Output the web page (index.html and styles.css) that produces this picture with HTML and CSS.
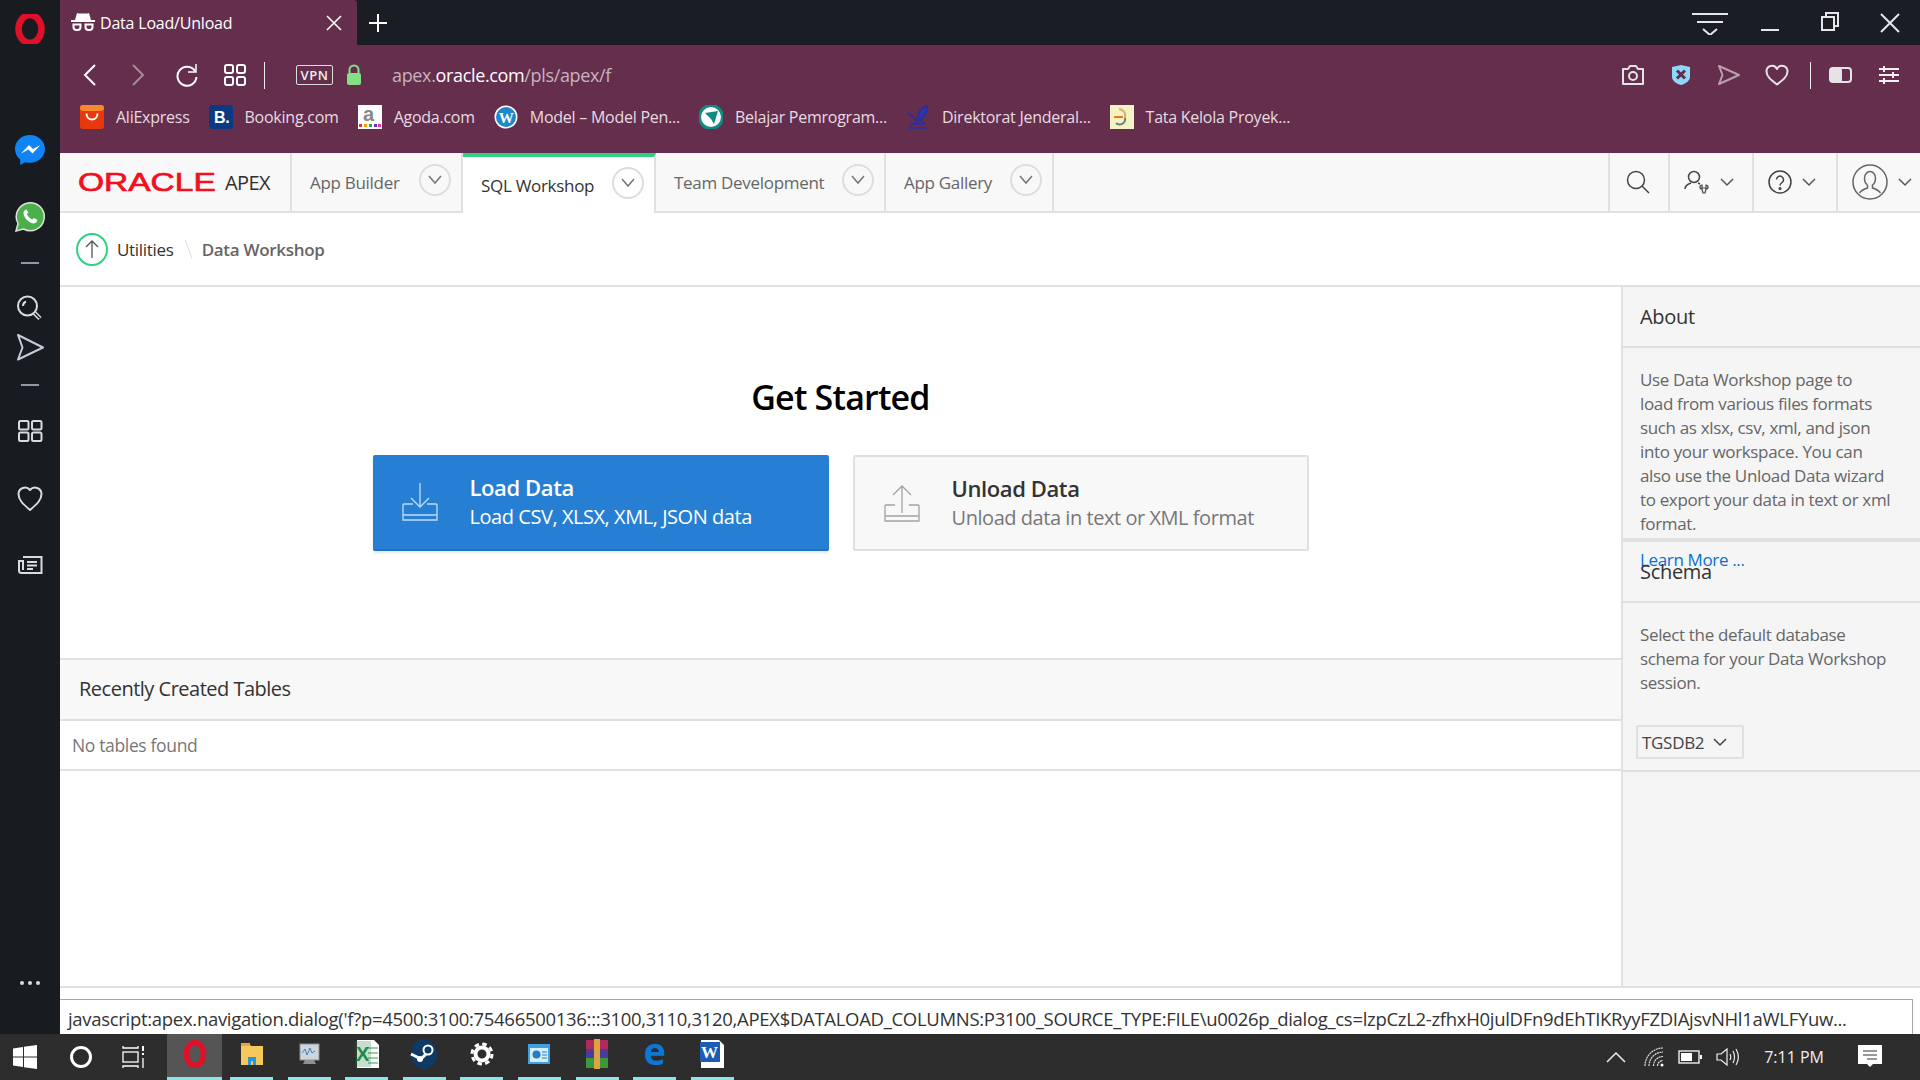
FILE: index.html
```html
<!DOCTYPE html>
<html>
<head>
	<meta charset="utf-8"/>
	<title>Data Load/Unload</title>
	<link rel="stylesheet" href="styles.css">
</head>
<body>

<div class="desktop">

	<!-- opera side rail -->
	<nav class="rail">
		<svg class="rail-logo" width="30" height="30" viewBox="0 0 30 30"><ellipse cx="15" cy="15" rx="11.5" ry="14" fill="none" stroke="#e0102a" stroke-width="6.5"/></svg>
		<div class="rail-group rail-apps">
			<svg width="30" height="30" viewBox="0 0 30 30"><path d="M15 0C6.7 0 0 6.2 0 14c0 4.3 2 8 5.2 10.600V30l5-2.800c1.500.4 3.100.6 4.800.6 8.300 0 15-6.200 15-13.800S23.300 0 15 0z" fill="#0f84f5"/><path d="M6 18.500l8-8.500 4 4 7.500-4-8 8.500-4-4z" fill="#fff"/></svg>
			<svg width="30" height="30" viewBox="0 0 30 30"><path d="M1 29l2-7.500A14 14 0 1 1 8.500 27z" fill="#4bb04b" stroke="#e0e0e0" stroke-width="1.500"/><path d="M10 8c-1.500 1-2 3-1 5.500 1.500 3.500 4 6 7.500 7.500 2.500 1 4.500 0 5.500-1.500l.3-1.800-3.500-1.800-1.500 1.700c-2.500-1-4.500-3-5.500-5.500l1.500-1.500L11.500 7.500z" fill="#fff"/></svg>
		</div>
		<div class="rail-dash"></div>
		<svg class="rail-icon" width="30" height="30" viewBox="0 0 30 30" fill="none" stroke="#d8dce0" stroke-width="2"><circle cx="12.500" cy="12" r="9.500"/><path d="M8 12a5 5 0 0 1 3-4.500"/><path d="M19.500 19l5.500 5.500" stroke-width="4.500"/><path d="M19.800 19.300l5 5" stroke="#181c21" stroke-width="1.500"/></svg>
		<svg class="rail-icon rail-send" width="30" height="30" viewBox="0 0 30 30" fill="none" stroke="#c8ccd2" stroke-width="2"><path d="M3 3l25 12.500L3 27.500l4.500-12z" stroke-linejoin="round"/></svg>
		<div class="rail-dash"></div>
		<div class="rail-group">
			<svg class="rail-icon" width="30" height="30" viewBox="0 0 30 30" fill="none" stroke="#d8dce0" stroke-width="2"><rect x="4" y="5" width="9.500" height="8.500" rx="1.500"/><rect x="17" y="5" width="9.500" height="8.500" rx="1.500"/><rect x="4" y="16.500" width="9.500" height="8.500" rx="1.500"/><rect x="17" y="16.500" width="9.500" height="8.500" rx="1.500"/></svg>
			<svg class="rail-icon" width="30" height="30" viewBox="0 0 30 30" fill="none" stroke="#d8dce0" stroke-width="2"><path d="M15 27C8 21 3.500 17 3.500 11A6.500 6.500 0 0 1 15 7a6.500 6.500 0 0 1 11.500 4c0 6-4.500 10-11.500 16z" stroke-linejoin="round"/></svg>
			<svg class="rail-icon" width="30" height="30" viewBox="0 0 30 30" fill="none" stroke="#d8dce0" stroke-width="2"><path d="M8 7h18.500v16H6.500A2.500 2.500 0 0 1 4 20.500V11h4v9"/><path d="M12 12h10M12 15.500h10M12 19h6"/></svg>
		</div>
		<div class="rail-more"><i></i><i></i><i></i></div>
	</nav>

	<div class="window">

		<!-- browser chrome -->
		<div class="titlebar">
			<div class="tab">
				<svg width="24" height="22" viewBox="0 0 24 22" fill="#fff"><path d="M6 1l1.500.5h9L18 1l2 7H4z"/><rect x="0" y="8" width="24" height="2"/><path d="M1.500 11.500h9v3.500a4 4 0 0 1-4 4h-1a4 4 0 0 1-4-4zm2 2v1.500a2 2 0 0 0 2 2h1a2 2 0 0 0 2-2v-1.500zM13.500 11.500h9v3.500a4 4 0 0 1-4 4h-1a4 4 0 0 1-4-4zm2 2v1.500a2 2 0 0 0 2 2h1a2 2 0 0 0 2-2v-1.500z"/></svg>
				<span class="tab-title">Data Load/Unload</span>
				<svg class="tab-close" width="16" height="16" viewBox="0 0 16 16" stroke="#fff" stroke-width="1.600"><path d="M1 1l14 14M15 1L1 15"/></svg>
			</div>
			<svg class="tab-new" width="20" height="20" viewBox="0 0 20 20" stroke="#fff" stroke-width="2"><path d="M10 1v18M1 10h18"/></svg>
			<div class="winctl">
				<svg width="60" height="24" viewBox="0 0 60 24" fill="none" stroke="#e4e6e8" stroke-width="2"><path d="M12 3h36M17 11h26M23 18l7 6 7-6"/></svg>
				<svg width="60" height="24" viewBox="0 0 60 24" fill="none" stroke="#e4e6e8" stroke-width="2"><path d="M21 19h18"/></svg>
				<svg width="60" height="24" viewBox="0 0 60 24" fill="none" stroke="#e4e6e8" stroke-width="2"><rect x="22" y="6" width="12" height="13"/><path d="M26 6V2h12v13h-4"/></svg>
				<svg width="60" height="24" viewBox="0 0 60 24" fill="none" stroke="#e4e6e8" stroke-width="2"><path d="M21 3l18 18M39 3L21 21"/></svg>
			</div>
		</div>

		<div class="toolbar">
			<div class="addressbar">
				<svg class="nav-back" width="16" height="24" viewBox="0 0 16 24" fill="none" stroke="#fff" stroke-width="2"><path d="M13 2L3 12l10 10"/></svg>
				<svg class="nav-fwd" width="16" height="24" viewBox="0 0 16 24" fill="none" stroke="#a88a9a" stroke-width="2"><path d="M3 2l10 10L3 22"/></svg>
				<svg class="nav-reload" width="24" height="24" viewBox="0 0 24 24" fill="none" stroke="#fff" stroke-width="2"><path d="M20 8A9.500 9.500 0 1 0 21.500 14"/><path d="M21 1v8h-8" stroke-width="1.500"/></svg>
				<svg class="nav-grid" width="24" height="24" viewBox="0 0 24 24" fill="none" stroke="#fff" stroke-width="2"><rect x="2" y="2" width="8" height="8" rx="2"/><rect x="14" y="2" width="8" height="8" rx="2"/><rect x="2" y="14" width="8" height="8" rx="2"/><rect x="14" y="14" width="8" height="8" rx="2"/></svg>
				<div class="bar-sep nav-sep"></div>
				<span class="vpn">VPN</span>
				<svg class="lock" width="16" height="22" viewBox="0 0 16 22"><path d="M3.500 9V6a4.500 4.500 0 0 1 9 0v3" fill="none" stroke="#85e085" stroke-width="2"/><rect x="1" y="9" width="14" height="12" rx="2" fill="#85e085"/></svg>
				<span class="url">apex.<b>oracle.com</b>/pls/apex/f</span>
				<div class="bar-tools">
					<svg class="tool-cam" width="24" height="22" viewBox="0 0 24 22" fill="none" stroke="#e4e4e4" stroke-width="2"><path d="M2 5h5l2-3h6l2 3h5v15H2z" stroke-linejoin="round"/><circle cx="12" cy="12" r="4"/></svg>
					<svg class="tool-shield" width="20" height="22" viewBox="0 0 20 22"><path d="M10 1l9 2v10c0 4-5 7-9 8-4-1-9-4-9-8V3z" fill="#8fd6fb"/><path d="M6 6.500l8 8M14 6.500l-8 8" stroke="#652e4c" stroke-width="3"/></svg>
					<svg class="tool-send" width="24" height="22" viewBox="0 0 24 22" fill="none" stroke="#b9a0ae" stroke-width="2"><path d="M2 2l20 9L2 20l3.500-9z" stroke-linejoin="round"/></svg>
					<svg class="tool-heart" width="24" height="22" viewBox="0 0 24 22" fill="none" stroke="#e4e4e4" stroke-width="2"><path d="M12 20.500C6 16 1.500 12.500 1.500 7.500A5.500 5.500 0 0 1 12 5a5.500 5.500 0 0 1 10.500 2.500c0 5-4.500 8.500-10.500 13z" stroke-linejoin="round"/></svg>
					<div class="bar-sep tool-sep"></div>
					<svg class="tool-batt" width="24" height="16" viewBox="0 0 24 16"><rect x="1" y="1" width="21" height="14" rx="3" fill="none" stroke="#e4e4e4" stroke-width="2"/><rect x="1" y="1" width="12" height="14" rx="2" fill="#e4e4e4"/></svg>
					<svg class="tool-tune" width="20" height="18" viewBox="0 0 20 18" stroke="#f0f0f0" stroke-width="2"><path d="M0 3h20M0 9h20M0 15h20M5 0v6M14 6v6M5 12v6"/></svg>
				</div>
			</div>
			<div class="bookmarks">
				<a class="bm">
					<svg width="24" height="24" viewBox="0 0 24 24"><rect width="24" height="24" rx="3" fill="#e8380d"/><rect width="24" height="6" rx="3" fill="#f7892b"/><path d="M6.500 8.500c0 8 11 8 11 0" fill="none" stroke="#fff" stroke-width="2"/></svg>
					AliExpress</a>
				<a class="bm">
					<svg width="24" height="24" viewBox="0 0 24 24"><rect width="24" height="24" rx="3" fill="#0b3a82"/><text x="5" y="18" class="bm-b">B.</text></svg>
					Booking.com</a>
				<a class="bm">
					<svg width="24" height="24" viewBox="0 0 24 24"><rect width="24" height="24" fill="#fff"/><text x="5" y="16" class="bm-a">a</text><rect x="1" y="19" width="3" height="3" fill="#e33"/><rect x="6" y="19" width="3" height="3" fill="#f90"/><rect x="11" y="19" width="3" height="3" fill="#3a3"/><rect x="16" y="19" width="3" height="3" fill="#63c"/><rect x="20" y="19" width="3" height="3" fill="#e3a"/></svg>
					Agoda.com</a>
				<a class="bm">
					<svg width="24" height="24" viewBox="0 0 24 24"><circle cx="12" cy="12" r="11.500" fill="#fff"/><circle cx="12" cy="12" r="10" fill="#2088c9"/><text x="12" y="17.500" class="bm-w">W</text></svg>
					Model – Model Pen...</a>
				<a class="bm">
					<svg width="24" height="24" viewBox="0 0 24 24"><circle cx="12" cy="12" r="11.500" fill="#fff"/><circle cx="12" cy="12" r="11.500" fill="none" stroke="#128a80" stroke-width="3"/><path d="M6 8l13-2-4 13-3-5z" fill="#128a80"/></svg>
					Belajar Pemrogram...</a>
				<a class="bm">
					<svg width="24" height="24" viewBox="0 0 24 24" fill="none" stroke="#2b2f9c" stroke-width="2"><path d="M2 8l10 8 4-3M12 16l-8 5M14 15l6 4M8 19h10"/><path d="M12 12c0-5 4-10 9-11 1 5-2 11-7 13z" fill="#3237a8"/><path d="M2 23h20" stroke-width="1.500"/></svg>
					Direktorat Jenderal...</a>
				<a class="bm">
					<svg width="24" height="24" viewBox="0 0 24 24" fill="none"><rect width="24" height="24" fill="#f4f3c4"/><path d="M9 4c6 1 7 6 6 9" stroke="#d8b070" stroke-width="2"/><path d="M4 12h9" stroke="#e87830" stroke-width="2"/><path d="M15 13c1 6-6 8-9 5" stroke="#777" stroke-width="2"/></svg>
					Tata Kelola Proyek...</a>
			</div>
		</div>

		<!-- apex app -->
		<header class="apex-head">
			<div class="apex-logo"><span class="oracle">ORACLE</span><span class="apex-name">APEX</span></div>
			<div class="apex-tab apex-tab-builder"><span>App Builder</span><span class="tab-caret"><svg width="14" height="10" viewBox="0 0 14 10" fill="none" stroke="#777" stroke-width="1.500"><path d="M1 1l6 7 6-7"/></svg></span></div>
			<div class="apex-tab apex-tab-sql active"><span>SQL Workshop</span><span class="tab-caret"><svg width="14" height="10" viewBox="0 0 14 10" fill="none" stroke="#777" stroke-width="1.500"><path d="M1 1l6 7 6-7"/></svg></span></div>
			<div class="apex-tab apex-tab-team"><span>Team Development</span><span class="tab-caret"><svg width="14" height="10" viewBox="0 0 14 10" fill="none" stroke="#777" stroke-width="1.500"><path d="M1 1l6 7 6-7"/></svg></span></div>
			<div class="apex-tab apex-tab-gallery"><span>App Gallery</span><span class="tab-caret"><svg width="14" height="10" viewBox="0 0 14 10" fill="none" stroke="#777" stroke-width="1.500"><path d="M1 1l6 7 6-7"/></svg></span></div>
			<div class="head-tools">
				<div class="head-tool tool-w60">
					<svg width="24" height="24" viewBox="0 0 24 24" fill="none" stroke="#444" stroke-width="1.500"><circle cx="10" cy="10" r="8.500"/><path d="M16 16l7 7"/></svg>
				</div>
				<div class="head-tool tool-w84">
					<svg width="26" height="24" viewBox="0 0 26 24" fill="none" stroke="#444" stroke-width="1.500"><circle cx="10" cy="7" r="5.500"/><path d="M1 19c0-3 3-5 6-6M14 13l2 1"/><path d="M16 17c0-1 1-2 2-2v3h4v-3c1 0 2 1 2 2s-1 2-2 2l-1 4h-2l-1-4c-1 0-2-1-2-2z" stroke-width="1.200"/></svg>
					<svg width="14" height="9" viewBox="0 0 14 9" fill="none" stroke="#555" stroke-width="1.500"><path d="M1 1l6 6 6-6"/></svg>
				</div>
				<div class="head-tool tool-w84">
					<svg width="24" height="24" viewBox="0 0 24 24" fill="none" stroke="#444" stroke-width="1.500"><circle cx="12" cy="12" r="11"/><path d="M8.500 9.500a3.500 3.500 0 1 1 5.500 3c-1.500 1-2 1.500-2 3"/><circle cx="12" cy="18.500" r=".8" fill="#444"/></svg>
					<svg width="14" height="9" viewBox="0 0 14 9" fill="none" stroke="#555" stroke-width="1.500"><path d="M1 1l6 6 6-6"/></svg>
				</div>
				<div class="head-tool tool-w84">
					<svg width="36" height="36" viewBox="0 0 36 36" fill="none" stroke="#666" stroke-width="1.500"><circle cx="18" cy="18" r="17"/><path d="M12.500 14a5.500 6.500 0 0 1 11 0c0 3-1.500 6-3 7v3c3 1 6 2 8 5M15.500 21c-1.500-1-3-4-3-7M15.500 21v3c-3 1-6 2-8 5"/></svg>
					<svg width="14" height="9" viewBox="0 0 14 9" fill="none" stroke="#555" stroke-width="1.500"><path d="M1 1l6 6 6-6"/></svg>
				</div>
			</div>
		</header>

		<div class="breadcrumb">
			<span class="crumb-up"><svg width="14" height="18" viewBox="0 0 14 18" fill="none" stroke="#555" stroke-width="1.300"><path d="M7 18V1M1 7l6-6 6 6"/></svg></span>
			<span class="crumb-link">Utilities</span>
			<span class="crumb-sep"></span>
			<b class="crumb-cur">Data Workshop</b>
		</div>

		<div class="content">
			<main class="main">
				<section class="start">
					<h1>Get Started</h1>
					<div class="start-cards">
						<a class="card card-load">
							<svg width="38" height="40" viewBox="0 0 38 40" fill="none" stroke="#c2dcf4" stroke-width="1.300"><path d="M19 1v24M10 16l9 9 9-9"/><path d="M12 22H3a1 1 0 0 0-1 1v15h34V23a1 1 0 0 0-1-1h-9"/><path d="M2 33h34"/></svg>
							<span class="card-text"><b>Load Data</b><span>Load CSV, XLSX, XML, JSON data</span></span>
						</a>
						<a class="card card-unload">
							<svg width="38" height="40" viewBox="0 0 38 40" fill="none" stroke="#a3a3a3" stroke-width="1.300"><path d="M19 30V3M10 12l9-9 9 9"/><path d="M12 22H3a1 1 0 0 0-1 1v15h34V23a1 1 0 0 0-1-1h-9"/><path d="M2 33h34"/></svg>
							<span class="card-text"><b>Unload Data</b><span>Unload data in text or XML format</span></span>
						</a>
					</div>
				</section>
				<section class="recent">
					<h2>Recently Created Tables</h2>
					<p>No tables found</p>
				</section>
			</main>
			<aside class="side">
				<section class="side-box side-about">
					<h3>About</h3>
					<div class="side-body">
						<p>Use Data Workshop page to<br>load from various files formats<br>such as xlsx, csv, xml, and json<br>into your workspace. You can<br>also use the Unload Data wizard<br>to export your data in text or xml<br>format.</p>
						<a class="side-link">Learn More ...</a>
					</div>
				</section>
				<section class="side-box side-schema">
					<h3>Schema</h3>
					<div class="side-body">
						<p>Select the default database<br>schema for your Data Workshop<br>session.</p>
						<div class="schema-select">TGSDB2<svg width="14" height="9" viewBox="0 0 14 9" fill="none" stroke="#444" stroke-width="1.500"><path d="M1 1l6 6 6-6"/></svg></div>
					</div>
				</section>
			</aside>
		</div>

		<footer class="foot">
			<span>idanfadilah.9c@gmail.com</span>
			<span class="foot-schema">tgsdb2</span>
			<span>en</span>
			<span class="foot-ver">Application Express 19.2.0.00.18</span>
		</footer>

		<div class="status-tip">javascript:apex.navigation.dialog('f?p=4500:3100:75466500136:::3100,3110,3120,APEX$DATALOAD_COLUMNS:P3100_SOURCE_TYPE:FILE\u0026p_dialog_cs=lzpCzL2-zfhxH0julDFn9dEhTIKRyyFZDIAjsvNHl1aWLFYuw...</div>
	</div>
</div>

<!-- windows taskbar -->
<div class="taskbar">
	<svg class="tb-win" width="24" height="24" viewBox="0 0 24 24" fill="#fff"><path d="M0 3.500l10-1.500v9.500H0zM11 1.800L24 0v11.500H11zM0 12.500h10V22L0 20.500zM11 12.500h13V24l-13-1.800z"/></svg>
	<svg class="tb-search" width="24" height="24" viewBox="0 0 24 24" fill="none" stroke="#fff" stroke-width="3"><circle cx="12" cy="12" r="9.500"/></svg>
	<svg class="tb-view" width="24" height="24" viewBox="0 0 24 24" fill="none" stroke="#fff" stroke-width="1.300"><path d="M1 1v2h15V1M1 23v-2h15v2"/><rect x="1" y="7" width="15" height="10"/><path d="M21 1v5M21 8v2" stroke-width="2"/><path d="M21 13v10" stroke-width="1.300"/></svg>
	<div class="tb-app tb-active">
		<svg width="24" height="28" viewBox="0 0 24 28"><ellipse cx="12" cy="14" rx="8.500" ry="11.500" fill="none" stroke="#e0102a" stroke-width="5.500"/></svg>
	</div>
	<div class="tb-app">
		<svg width="26" height="26" viewBox="0 0 26 26"><path d="M2 2h8l2 3h12v19H2z" fill="#f5c95c"/><rect x="2" y="2" width="9" height="3" fill="#e3a93a"/><path d="M9 24v-8h8v8h-3v-4h-2v4z" fill="#2a97d8"/></svg>
	</div>
	<div class="tb-app">
		<svg width="26" height="26" viewBox="0 0 26 26"><rect x="4" y="3" width="19" height="16" fill="#cfd6da" stroke="#8c9297"/><path d="M6 12l3-4 2 6 3-7 2 5 3-2" fill="none" stroke="#3a85c8"/><path d="M9 19h9l2 4H7z" fill="#8c9297"/></svg>
	</div>
	<div class="tb-app">
		<svg width="26" height="30" viewBox="0 0 26 30"><path d="M3 1h17l5 5v23H3z" fill="#fff"/><path d="M14 9h10M14 14h10M14 19h10M14 24h10" stroke="#9ccca6" stroke-width="2"/><rect x="1" y="2" width="16" height="26" fill="#1f7a3f" opacity=".25"/><text x="2" y="22" class="tb-x">X</text></svg>
	</div>
	<div class="tb-app">
		<svg width="28" height="30" viewBox="0 0 28 30"><ellipse cx="14" cy="15" rx="13" ry="15" fill="#0f3a66"/><circle cx="18" cy="11" r="4.500" fill="none" stroke="#fff" stroke-width="2"/><path d="M1 15l10 5 5-5" fill="none" stroke="#fff" stroke-width="3"/><circle cx="10" cy="20" r="3" fill="#fff"/></svg>
	</div>
	<div class="tb-app">
		<svg width="24" height="24" viewBox="0 0 24 24"><circle cx="12" cy="12" r="6.500" fill="none" stroke="#fff" stroke-width="4"/><circle cx="12" cy="12" r="10" fill="none" stroke="#fff" stroke-width="3" stroke-dasharray="4.500 3.350"/></svg>
	</div>
	<div class="tb-app">
		<svg width="24" height="24" viewBox="0 0 24 24"><rect x="1" y="2" width="22" height="20" fill="#3ea0e0"/><rect x="3" y="6" width="18" height="14" fill="#d6edfa"/><circle cx="9.500" cy="12.500" r="4" fill="#2a7cc0"/><path d="M15 10h5M15 13h5M15 16h5" stroke="#2a7cc0"/></svg>
	</div>
	<div class="tb-app">
		<svg width="24" height="30" viewBox="0 0 24 30"><rect x="1" y="1" width="22" height="9" fill="#b02a5b"/><rect x="1" y="10" width="22" height="9" fill="#4b3c9c"/><rect x="1" y="19" width="22" height="10" fill="#3a9a3a"/><rect x="9" y="0" width="6" height="30" fill="#d9a441"/></svg>
	</div>
	<div class="tb-app">
		<span class="tb-edge">e</span>
	</div>
	<div class="tb-app">
		<svg width="26" height="30" viewBox="0 0 26 30"><path d="M2 1h18l5 5v23H2z" fill="#fff"/><rect x="1" y="3" width="20" height="20" fill="#1e5cb3"/><text x="2" y="19" class="tb-w">W</text></svg>
	</div>
	<div class="tray">
		<svg class="tray-up" width="20" height="12" viewBox="0 0 20 12" fill="none" stroke="#eee" stroke-width="1.500"><path d="M1 11l9-9 9 9"/></svg>
		<svg class="tray-wifi" width="20" height="20" viewBox="0 0 20 20" fill="none" stroke="#ddd" stroke-width="1.200"><path d="M1 19a18 18 0 0 1 18-18M5 19A14 14 0 0 1 19 5M9.500 19A9.500 9.500 0 0 1 19 9.500M13.500 19a5.500 5.500 0 0 1 5.500-5.500" stroke-dasharray="2 .6"/><circle cx="18" cy="18" r="1.500" fill="#fff" stroke="none"/></svg>
		<svg class="tray-batt" width="24" height="14" viewBox="0 0 24 14"><rect x="1" y="1" width="20" height="12" fill="none" stroke="#fff" stroke-width="1.300"/><rect x="3" y="3" width="11" height="8" fill="#fff"/><rect x="22" y="5" width="2" height="4" fill="#fff"/></svg>
		<svg class="tray-vol" width="24" height="18" viewBox="0 0 24 18" fill="none" stroke="#eee" stroke-width="1.200"><path d="M1 6h4l6-5v16l-6-5H1z"/><path d="M14 6c1 2 1 4 0 6M17 3c2 4 2 8 0 12M20 1c3 5 3 11 0 16"/></svg>
		<span class="tray-time">7:11 PM</span>
		<svg class="tray-note" width="24" height="24" viewBox="0 0 24 24"><path d="M0 0h24v19h-9l-3 3-3-3H0z" fill="#fff"/><path d="M5 6h14M5 10h14M9 14h10" stroke="#333" stroke-width="1"/></svg>
	</div>
</div>

</body>
</html>
```

FILE: styles.css
```css
*{
	margin:0;padding:0;
	box-sizing:border-box;
}
html,body{
	width:1920px;
	height:1080px;
	overflow:hidden;
}
body{
	font-family:"Open Sans","Noto Sans",sans-serif;
	background:#fff;
	color:#404040;
}
svg{
	flex:none;
	display:block;
}

.desktop{
	display:flex;
	height:1034px;
}

/* side rail */
.rail{
	width:60px;
	flex:none;
	background:#181c21;
	display:flex;
	flex-direction:column;
	align-items:center;
	padding:14px 0 49px;
}
.rail-group{
	display:flex;
	flex-direction:column;
	gap:37px;
}
.rail-apps{margin-top:91px;}
.rail-dash{
	width:18px;
	height:2px;
	background:#8d99a4;
	margin:30px 0;
}
.rail-send{margin-top:8px;margin-bottom:-8px;}
.rail-more{
	margin-top:auto;
	display:flex;
	gap:4px;
}
.rail-more i{
	width:4px;
	height:4px;
	border-radius:50%;
	background:#d8dce0;
}

.window{
	flex:1;
	min-width:0;
	display:flex;
	flex-direction:column;
	position:relative;
}

/* browser chrome */
.titlebar{
	height:45px;
	background:#1a1d23;
	display:flex;
	align-items:center;
	flex:none;
}
.tab{
	width:297px;
	height:45px;
	background:#652e4c;
	display:flex;
	align-items:center;
	padding:0 15px 0 11px;
	color:#fff;
	border-top-right-radius:3px;
}
.tab-title{
	margin-left:5px;
	font-size:16px;
	letter-spacing:-.2px;
}
.tab-close{margin-left:auto;}
.tab-new{margin-left:11px;}
.winctl{
	margin-left:auto;
	display:flex;
}
.toolbar{
	height:108px;
	background:#652e4c;
	flex:none;
	color:#e6dbe1;
}
.addressbar{
	height:57px;
	display:flex;
	align-items:center;
	padding-left:22px;
	padding-top:3px;
}
.nav-fwd{margin-left:32px;}
.nav-reload{margin-left:29px;}
.nav-grid{margin-left:24px;}
.bar-sep{
	width:1px;
	height:27px;
	background:#eee;
}
.nav-sep{margin-left:17px;}
.vpn{
	margin-left:31px;
	width:37px;
	height:20px;
	border:1px solid #ddd;
	border-radius:2px;
	font-size:13px;
	font-weight:600;
	line-height:18px;
	text-align:center;
	letter-spacing:.6px;
	color:#eee;
}
.lock{margin-left:13px;}
.url{
	margin-left:30px;
	font-size:18px;
	letter-spacing:-.35px;
	color:#c7b3be;
}
.url b{
	font-weight:400;
	color:#fff;
}
.bar-tools{
	margin-left:auto;
	display:flex;
	align-items:center;
	padding-right:21px;
}
.tool-shield{margin-left:26px;}
.tool-send{margin-left:26px;}
.tool-heart{margin-left:24px;}
.tool-sep{margin-left:21px;}
.tool-batt{margin-left:18px;}
.tool-tune{margin-left:26px;}

.bookmarks{
	display:flex;
	align-items:center;
	height:30px;
	padding-left:20px;
	gap:19px;
}
.bm{
	display:flex;
	align-items:center;
	gap:12px;
	font-size:16px;
	letter-spacing:-.25px;
	white-space:nowrap;
}
.bm-b{font:700 16px "Liberation Sans",sans-serif;fill:#fff;}
.bm-a{font:700 20px "Liberation Sans",sans-serif;fill:#888;}
.bm-w{font:700 15px "Liberation Serif",serif;fill:#fff;text-anchor:middle;}

/* apex header */
.apex-head{
	height:60px;
	flex:none;
	display:flex;
	background:#f8f8f8;
	border-bottom:2px solid #e0e0e0;
}
.apex-logo{
	width:232px;
	flex:none;
	display:flex;
	align-items:center;
	padding-left:18px;
	border-right:2px solid #e0e0e0;
}
.oracle{
	width:140px;
	display:block;
	font:400 25px/1 "Liberation Sans",sans-serif;
	color:#f3101c;
	-webkit-text-stroke:.7px #f3101c;
	transform:scaleX(1.34);
	transform-origin:left center;
}
.apex-name{
	margin-left:7px;
	font-size:20px;
	letter-spacing:-.6px;
	color:#303030;
}
.apex-tab{
	display:flex;
	align-items:center;
	justify-content:space-between;
	padding:0 10px 0 18px;
	font-size:17px;
	letter-spacing:-.3px;
	color:#666;
	border-right:2px solid #e0e0e0;
}
.tab-caret{
	width:32px;
	height:32px;
	border:2px solid #ddd;
	border-radius:50%;
	display:flex;
	align-items:center;
	justify-content:center;
	margin-top:-4px;
}
.apex-tab-builder{width:171px;}
.apex-tab-sql{width:193px;}
.apex-tab-team{width:230px;}
.apex-tab-gallery{width:168px;}
.apex-tab.active{
	background:#fff;
	color:#333;
	border-top:4px solid #2fd082;
	border-right:2px solid #e0e0e0;
	height:60px;
	margin-right:0;
}
.head-tools{
	margin-left:auto;
	display:flex;
}
.head-tool{
	display:flex;
	align-items:center;
	gap:10px;
	padding-left:16px;
	border-left:2px solid #e0e0e0;
}
.tool-w60{width:60px;}
.tool-w84{width:84px;padding-left:14px;}

/* breadcrumb */
.breadcrumb{
	height:74px;
	flex:none;
	display:flex;
	align-items:center;
	padding-left:16px;
	border-bottom:2px solid #e0e0e0;
	font-size:17px;
	letter-spacing:-.3px;
}
.crumb-up{
	width:32px;
	height:33px;
	border:2px solid #2fd082;
	border-radius:50%;
	display:flex;
	align-items:center;
	justify-content:center;
}
.crumb-link{margin-left:9px;color:#333;}
.crumb-sep{
	width:1px;
	height:20px;
	margin:0 13px 0 14px;
	background:#ddd;
	transform:rotate(-20deg);
}
.crumb-cur{
	font-weight:600;
	color:#666;
}

/* body */
.content{
	height:701px;
	flex:none;
	display:flex;
	border-bottom:2px solid #e0e0e0;
}
.main{
	flex:1;
	min-width:0;
}
.start{
	height:373px;
	padding-top:85px;
	border-bottom:2px solid #e0e0e0;
}
.start h1{
	font-size:34px;
	font-weight:600;
	line-height:50px;
	letter-spacing:-.8px;
	text-align:center;
	color:#000;
}
.start-cards{
	display:flex;
	justify-content:center;
	gap:24px;
	margin-top:33px;
}
.card{
	width:456px;
	height:96px;
	display:flex;
	align-items:center;
	border-radius:2px;
	padding-left:28px;
}
.card-text{
	display:flex;
	flex-direction:column;
	margin-left:31px;
}
.card-text b{
	font-size:22px;
	font-weight:600;
	line-height:30px;
	letter-spacing:-.4px;
}
.card-text span{
	font-size:20px;
	line-height:30px;
	letter-spacing:-.45px;
}
.card-load{
	background:#277fd3;
	color:#fff;
	box-shadow:0 2px 3px rgba(0,0,0,.1);
	border-bottom:2px solid #2272bd;
}
.card-unload{
	background:#f8f8f8;
	border:2px solid #e0e0e0;
	color:#333;
}
.card-unload span span{color:#777;}
.recent h2{
	height:61px;
	background:#f8f8f8;
	border-bottom:2px solid #e0e0e0;
	padding-left:19px;
	font-size:20px;
	font-weight:400;
	line-height:58px;
	letter-spacing:-.5px;
	color:#333;
}
.recent p{
	height:50px;
	padding-left:12px;
	font-size:17.500px;
	line-height:48px;
	letter-spacing:-.35px;
	color:#777;
	border-bottom:2px solid #e0e0e0;
}

.side{
	width:299px;
	flex:none;
	background:#f5f5f5;
	border-left:2px solid #e0e0e0;
}
.side-box h3{
	height:62px;
	padding-left:17px;
	font-size:20px;
	font-weight:400;
	line-height:60px;
	letter-spacing:-.3px;
	color:#333;
	border-bottom:2px solid #e0e0e0;
}
.side-about{
	height:255px;
	border-bottom:4px solid #e0e0e0;
}
.side-about h3{height:61px;}
.side-body{padding:20px 17px 0;}
.side-body p{
	font-size:17px;
	line-height:24px;
	letter-spacing:-.35px;
	color:#666;
	white-space:nowrap;
}
.side-link{
	display:block;
	margin-top:12px;
	font-size:17px;
	line-height:24px;
	letter-spacing:-.35px;
	color:#0572ce;
}
.side-schema{
	height:230px;
	border-bottom:2px solid #e0e0e0;
}
.side-schema h3{height:61px;}
.schema-select{
	display:flex;
	align-items:center;
	gap:9px;
	width:108px;
	height:34px;
	margin:30px 0 0 -4px;
	padding-left:4px;
	border:2px solid #e0e0e0;
	border-radius:2px;
	font-size:17px;
	letter-spacing:-.3px;
	color:#444;
}

.foot{
	display:flex;
	gap:8px;
	align-items:center;
	padding:12px 10px 0 98px;
	font-size:15px;
	color:#eee;
}
.foot-schema{margin-left:40px;}
.foot-ver{margin-left:auto;}

.status-tip{
	position:absolute;
	left:0;
	top:999px;
	width:1853px;
	height:35px;
	padding-left:8px;
	background:rgba(255,255,255,.9);
	border:1px solid #aaa;
	border-left:0;
	border-bottom:0;
	font-size:18.500px;
	line-height:38px;
	letter-spacing:-.3px;
	white-space:nowrap;
	overflow:hidden;
	color:#333;
}

/* taskbar */
.taskbar{
	height:46px;
	background:#2d2d2d;
	display:flex;
	align-items:center;
	position:relative;
	padding-left:13px;
}
.tb-search{margin-left:32px;}
.tb-view{margin-left:29px;}
.tb-app{
	width:43px;
	height:46px;
	margin-right:14.600px;
	padding-bottom:3px;
	display:flex;
	align-items:center;
	justify-content:center;
	border-bottom:3px solid #8ae6e6;
}
.tb-active{
	width:55px;
	margin-left:21px;
	margin-right:8px;
	background:#555;
}
.tb-x{font:700 20px "Liberation Sans",sans-serif;fill:#1f8a4c;}
.tb-w{font:700 17px "Liberation Serif",serif;fill:#fff;}
.tb-edge{
	font:700 38px/38px "Open Sans",sans-serif;
	color:#0a78d4;
	margin-top:-8px;
}
.tray{
	margin-left:auto;
	display:flex;
	align-items:center;
	padding-right:38px;
}
.tray-up{margin-right:18px;}
.tray-wifi{margin-right:14px;}
.tray-batt{margin-right:14px;}
.tray-vol{margin-right:24px;}
.tray-time{
	font-size:16px;
	color:#f0f0f0;
	margin-right:34px;
}
```
